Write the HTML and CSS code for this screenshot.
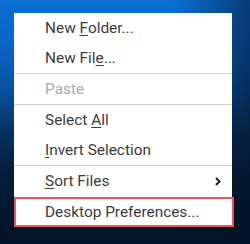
FILE: index.html
```html
<!DOCTYPE html>
<html lang="en">
  <head>
    <meta charset="UTF-8" />
    <meta name="viewport" content="width=device-width, initial-scale=1.0" />
    <title>Desktop Menu</title>
    <link rel="stylesheet" href="styles.css">
  </head>
  <body>
    <div class="menu">
      <div class="item">New <u>F</u>older...</div>
      <div class="item">New Fil<u>e</u>...</div>
      <div class="sep"></div>
      <div class="item disabled">Paste</div>
      <div class="sep"></div>
      <div class="item">Select <u>A</u>ll</div>
      <div class="item"><u>I</u>nvert Selection</div>
      <div class="sep"></div>
      <div class="item submenu">
        <span><u>S</u>ort Files</span>
        <svg width="6" height="9" viewBox="0 0 6 9">
          <path d="M1 1 L4.5 4.5 L1 8" fill="none" stroke="#2a2a2a" stroke-width="2.2" />
        </svg>
      </div>
      <div class="item selected">Desktop Preferences...</div>
    </div>
  </body>
</html>
```

FILE: styles.css
```css
body {
  margin: 0;
  padding: 13px 0 0 14px;
  height: 244px;
  box-sizing: border-box;
  font-family: Roboto, "Liberation Sans", sans-serif;
  background:
    linear-gradient(90deg, rgba(2, 18, 40, 0) 0%, rgba(2, 18, 40, 0) 70%, rgba(2, 18, 40, 0.55) 100%),
    linear-gradient(180deg, #0b6fd4 0%, #0a64c4 18%, #0a4f9c 38%, #07305c 55%, #041d38 72%, #021226 100%);
}

.menu {
  width: 218px;
  background-color: #ffffff;
}

.item {
  height: 30px;
  line-height: 30px;
  padding-left: 31px;
  font-size: 15.4px;
  color: #3c3c3c;
  white-space: nowrap;
}

.item u {
  text-underline-offset: 2px;
}

.disabled {
  color: #ababab;
}

.sep {
  height: 1px;
  background-color: #cfcfcf;
}

.submenu {
  display: flex;
  justify-content: space-between;
  align-items: center;
  padding-right: 11px;
}

.selected {
  box-sizing: border-box;
  width: 220px;
  height: 30px;
  margin-top: 1px;
  padding-left: 29px;
  line-height: 26px;
  border: 2px solid #ea5557;
}
```
